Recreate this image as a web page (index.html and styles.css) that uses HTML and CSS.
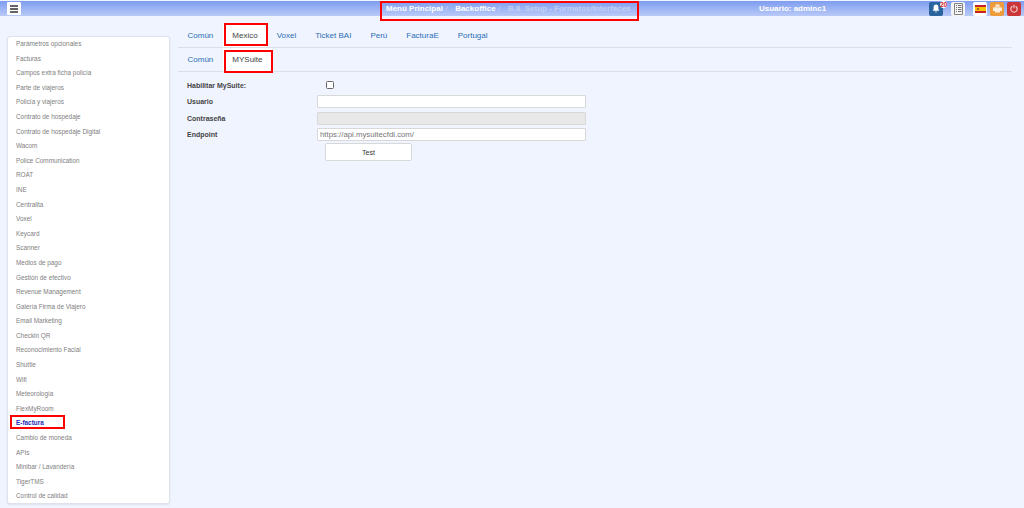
FILE: index.html
```html
<!DOCTYPE html>
<html lang="es">
<head>
<meta charset="utf-8">
<title>Backoffice</title>
<link rel="stylesheet" href="styles.css">
</head>
<body>
<header class="topbar">
  <div class="bar-left"><button class="menu-btn" aria-label="Menú"><svg width="8" height="8" viewBox="0 0 8 8"><path d="M0 1h8M0 4h8M0 7h8" stroke="#333" stroke-width="1.500"/></svg></button></div>
  <nav class="crumbs">
    <a class="crumb">Menú Principal</a><span class="sep">/</span><a class="crumb">Backoffice</a><span class="sep">/</span><span class="crumb-cur">B.8. Setup - Formatos/Interfaces</span>
  </nav>
  <div class="user">Usuario: adminc1</div>
  <div class="icons">
    <span class="ico ico-bell"><svg width="8" height="9" viewBox="0 0 10 11"><path d="M5 0.500C3 .5 2 2 2 4v2.500L.8 8.300h8.400L8 6.500V4C8 2 7 .5 5 .5zM3.800 9.100a1.200 1.200 0 0 0 2.400 0z" fill="#fff"/></svg><b class="badge">20</b></span>
    <span class="ico ico-list"><svg width="9" height="12" viewBox="0 0 9 12"><path d="M.5.5h8v11h-8z" fill="#f4f4f4" stroke="#666" stroke-width=".8"/><path d="M2 2.500h1M4 2.500h3.500M2 4.500h1M4 4.500h3.500M2 6.500h1M4 6.500h3.500M2 8.500h1M4 8.500h3.500" stroke="#555" stroke-width=".8"/></svg></span>
    <span class="ico ico-flag"><svg width="11" height="8" viewBox="0 0 11 8"><path d="M0 0h11v8H0z" fill="#c8202a"/><path d="M0 2h11v4H0z" fill="#f7c600"/><path d="M2 3h2v2H2z" fill="#b5522a"/></svg></span>
    <span class="ico ico-print"><svg width="9" height="9" viewBox="0 0 11 10"><path d="M3 0h5v3H3zM1 3.500h9a1 1 0 0 1 1 1V8H8.500v2h-6V8H0V4.500a1 1 0 0 1 1-1z" fill="#fbeedd"/></svg></span>
    <span class="ico ico-power"><svg width="8" height="9" viewBox="0 0 10 11"><path d="M3 2.600a4 4 0 1 0 4 0M5 .8v4.400" fill="none" stroke="#f7dcdc" stroke-width="1.300"/></svg></span>
  </div>
</header>
<div class="page">
  <aside class="side">
    <a class="side-item">Parámetros opcionales</a>
    <a class="side-item">Facturas</a>
    <a class="side-item">Campos extra ficha policía</a>
    <a class="side-item">Parte de viajeros</a>
    <a class="side-item">Policía y viajeros</a>
    <a class="side-item">Contrato de hospedaje</a>
    <a class="side-item">Contrato de hospedaje Digital</a>
    <a class="side-item">Wacom</a>
    <a class="side-item">Police Communication</a>
    <a class="side-item">ROAT</a>
    <a class="side-item">INE</a>
    <a class="side-item">Centralita</a>
    <a class="side-item">Voxel</a>
    <a class="side-item">Keycard</a>
    <a class="side-item">Scanner</a>
    <a class="side-item">Medios de pago</a>
    <a class="side-item">Gestión de efectivo</a>
    <a class="side-item">Revenue Management</a>
    <a class="side-item">Galería Firma de Viajero</a>
    <a class="side-item">Email Marketing</a>
    <a class="side-item">Checkin QR</a>
    <a class="side-item">Reconocimiento Facial</a>
    <a class="side-item">Shuttle</a>
    <a class="side-item">Wifi</a>
    <a class="side-item">Meteorología</a>
    <a class="side-item">FlexMyRoom</a>
    <a class="side-item side-active">E-factura</a>
    <a class="side-item">Cambio de moneda</a>
    <a class="side-item">APIs</a>
    <a class="side-item">Minibar / Lavandería</a>
    <a class="side-item">TigerTMS</a>
    <a class="side-item">Control de calidad</a>
  </aside>
  <main class="content">
    <ul class="tabs">
      <li class="tab">Común</li>
      <li class="tab tab-active">Mexico</li>
      <li class="tab">Voxel</li>
      <li class="tab">Ticket BAI</li>
      <li class="tab">Perú</li>
      <li class="tab">FacturaE</li>
      <li class="tab">Portugal</li>
    </ul>
    <ul class="tabs">
      <li class="tab">Común</li>
      <li class="tab tab-active">MYSuite</li>
    </ul>
    <form class="form">
      <div class="row row-check"><label class="lbl">Habilitar MySuite:</label><input class="check" type="checkbox"></div>
      <div class="row"><label class="lbl">Usuario</label><input class="field" type="text"></div>
      <div class="row"><label class="lbl">Contraseña</label><input class="field" type="text" disabled></div>
      <div class="row"><label class="lbl">Endpoint</label><input class="field" type="text" value="https://api.mysuitecfdi.com/"></div>
      <div class="row row-btn"><button class="test" type="button">Test</button></div>
    </form>
  </main>
</div>
<div class="mark mark-crumbs"></div>
<div class="mark mark-tab1"></div>
<div class="mark mark-tab2"></div>
<div class="mark mark-side"></div>
</body>
</html>
```
FILE: styles.css
```css
* { box-sizing: border-box; }
html, body { height: 100%; }
body { margin: 0; background: #f0f4ff; font-family: "Liberation Sans", Arial, sans-serif; overflow: hidden; position: relative; }
.topbar { height: 15px; margin-top: 1px; display: flex; align-items: center; position: relative; background: linear-gradient(#7f9df0, #b9caf8); }
.bar-left { width: 380px; padding-left: 7px; }
.menu-btn { width: 14px; height: 13px; padding: 0; border: 0; border-radius: 1px; background: #fff; display: flex; align-items: center; justify-content: center; }
.crumbs { width: 379px; padding-left: 6px; font-size: 8px; font-weight: 700; color: #fff; white-space: nowrap; }
.sep { color: #c3d0f7; font-weight: 400; margin: 0 7.500px 0 2.500px; }
.crumb-cur { color: #c3cff2; }
.user { font-size: 8px; font-weight: 700; color: #fff; width: 170px; }
.icons { display: flex; align-items: center; }
.ico { width: 14px; height: 14px; border-radius: 2px; display: flex; align-items: center; justify-content: center; position: relative; }
.ico-bell { background: #2a649f; margin-right: 8px; }
.ico-list { background: #f4f4f4; margin-right: 8px; }
.ico-flag { background: #fff; margin-right: 3px; }
.ico-print { background: #ee9c3a; margin-right: 3px; }
.ico-power { background: #cb3537; }
.badge { position: absolute; left: 11px; top: -1px; font-size: 6.500px; line-height: 7px; color: #d2232a; background: #fff; border-radius: 4px; font-weight: 700; }
.page { display: flex; align-items: flex-start; padding-top: 20px; }
.side { width: 163px; height: 468px; margin-left: 7px; background: #fff; border: 1px solid #dfe2ea; border-radius: 3px; box-shadow: 0 1px 2px rgba(0,0,0,.08); display: flex; flex-direction: column; overflow: hidden; }
.side-item { display: block; height: 14.600px; line-height: 14.600px; padding-left: 8px; font-size: 6.400px; color: #808080; white-space: nowrap; flex: none; }
.side-active { color: #2a2ab5; font-weight: 700; }
.content { margin-left: 8px; width: 834px; margin-top: -12px; }
.tabs { list-style: none; margin: 0; padding: 0; height: 24px; display: flex; border-bottom: 1px solid #dcdfe6; }
.tab { padding: 0 9.500px; line-height: 23px; font-size: 8px; color: #2c6fb3; white-space: nowrap; }
.tab-active { color: #444; background: #fff; }
.form { padding: 5px 0 0 9px; display: flex; flex-direction: column; }
.row { display: flex; align-items: center; height: 16.500px; }
.lbl { width: 130px; font-size: 7px; font-weight: 700; color: #444; }
.check { margin: 0 0 0 9px; width: 8px; height: 8px; appearance: none; background: #fff; border: 1px solid #666; border-radius: 1.500px; }
.field { width: 269px; height: 13px; padding: 0 2px; border: 1px solid #d8d8d8; border-radius: 1px; background: #fff; font: 7.800px "Liberation Sans", Arial, sans-serif; color: #777; }
.field:disabled { background: #e8e8e8; }
.row-btn { height: 18px; padding-left: 138px; }
.test { width: 87px; height: 18px; padding: 0; background: #fff; border: 1px solid #d8d8d8; border-radius: 2px; font: 7px "Liberation Sans", Arial, sans-serif; color: #333; }
.mark { position: absolute; border: 2px solid #f00; pointer-events: none; }
.mark-crumbs { left: 380px; top: 1px; width: 259px; height: 20px; }
.mark-tab1 { left: 224px; top: 23px; width: 44px; height: 23px; }
.mark-tab2 { left: 224px; top: 50px; width: 49px; height: 23px; }
.mark-side { left: 10px; top: 415px; width: 55px; height: 14px; }
```
